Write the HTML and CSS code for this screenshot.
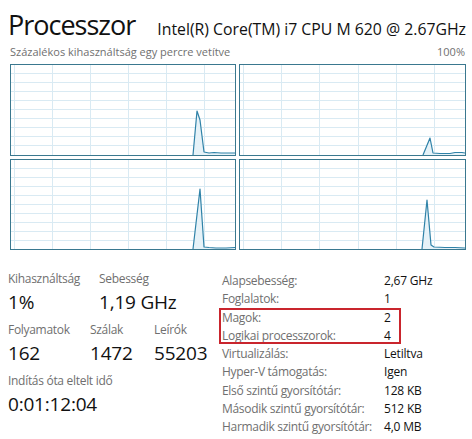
FILE: index.html
```html
<!DOCTYPE html>
<html lang="hu">
<head>
<meta charset="utf-8">
<title>Processzor</title>
<link rel="stylesheet" href="styles.css">
</head>
<body>
<div class="page">
  <header class="head">
    <h1 class="title">Processzor</h1>
    <div class="model">Intel(R) Core(TM) i7 CPU M 620 @ 2.67GHz</div>
  </header>
  <div class="sub">
    <span>Százalékos kihasználtság egy percre vetítve</span>
    <span>100%</span>
  </div>
  <div class="charts">
    <div class="chart">
      <svg viewBox="0 0 224 90" preserveAspectRatio="none">
        <g class="grid">
          <line x1="3.5" y1="0" x2="3.5" y2="90"/><line x1="41.5" y1="0" x2="41.5" y2="90"/><line x1="79.5" y1="0" x2="79.5" y2="90"/><line x1="117.5" y1="0" x2="117.5" y2="90"/><line x1="155.5" y1="0" x2="155.5" y2="90"/><line x1="193.5" y1="0" x2="193.5" y2="90"/>
          <line x1="0" y1="8.5" x2="224" y2="8.5"/><line x1="0" y1="17.5" x2="224" y2="17.5"/><line x1="0" y1="26.5" x2="224" y2="26.5"/><line x1="0" y1="35.5" x2="224" y2="35.5"/><line x1="0" y1="44.5" x2="224" y2="44.5"/><line x1="0" y1="53.5" x2="224" y2="53.5"/><line x1="0" y1="62.5" x2="224" y2="62.5"/><line x1="0" y1="71.5" x2="224" y2="71.5"/><line x1="0" y1="80.5" x2="224" y2="80.5"/>
        </g>
        <polygon class="fill" points="182,90 186,46 189,55 193,87 198,88 203,87.5 210,88 224,88 224,90"/>
        <polyline class="line" points="182,90 186,46 189,55 193,87 198,88 203,87.5 210,88 224,88"/>
      </svg>
    </div>
    <div class="chart">
      <svg viewBox="0 0 225 90" preserveAspectRatio="none">
        <g class="grid">
          <line x1="3.5" y1="0" x2="3.5" y2="90"/><line x1="41.5" y1="0" x2="41.5" y2="90"/><line x1="79.5" y1="0" x2="79.5" y2="90"/><line x1="118.5" y1="0" x2="118.5" y2="90"/><line x1="156.5" y1="0" x2="156.5" y2="90"/><line x1="194.5" y1="0" x2="194.5" y2="90"/>
          <line x1="0" y1="8.5" x2="225" y2="8.5"/><line x1="0" y1="17.5" x2="225" y2="17.5"/><line x1="0" y1="26.5" x2="225" y2="26.5"/><line x1="0" y1="35.5" x2="225" y2="35.5"/><line x1="0" y1="44.5" x2="225" y2="44.5"/><line x1="0" y1="53.5" x2="225" y2="53.5"/><line x1="0" y1="62.5" x2="225" y2="62.5"/><line x1="0" y1="71.5" x2="225" y2="71.5"/><line x1="0" y1="80.5" x2="225" y2="80.5"/>
        </g>
        <polygon class="fill" points="183,90 190,73 193,88 200,88.5 210,88.5 215,87.5 222,87.5 225,88 225,90"/>
        <polyline class="line" points="183,90 190,73 193,88 200,88.5 210,88.5 215,87.5 222,87.5 225,88"/>
      </svg>
    </div>
    <div class="chart">
      <svg viewBox="0 0 224 89" preserveAspectRatio="none">
        <g class="grid">
          <line x1="3.5" y1="0" x2="3.5" y2="89"/><line x1="41.5" y1="0" x2="41.5" y2="89"/><line x1="79.5" y1="0" x2="79.5" y2="89"/><line x1="117.5" y1="0" x2="117.5" y2="89"/><line x1="155.5" y1="0" x2="155.5" y2="89"/><line x1="193.5" y1="0" x2="193.5" y2="89"/>
          <line x1="0" y1="8.5" x2="224" y2="8.5"/><line x1="0" y1="17.5" x2="224" y2="17.5"/><line x1="0" y1="26.5" x2="224" y2="26.5"/><line x1="0" y1="35.5" x2="224" y2="35.5"/><line x1="0" y1="44.5" x2="224" y2="44.5"/><line x1="0" y1="53.5" x2="224" y2="53.5"/><line x1="0" y1="62.5" x2="224" y2="62.5"/><line x1="0" y1="71.5" x2="224" y2="71.5"/><line x1="0" y1="80.5" x2="224" y2="80.5"/>
        </g>
        <polygon class="fill" points="182,89 189,29 193,87 198,87.5 205,88 215,88 224,87.5 224,89"/>
        <polyline class="line" points="182,89 189,29 193,87 198,87.5 205,88 215,88 224,87.5"/>
      </svg>
    </div>
    <div class="chart">
      <svg viewBox="0 0 225 89" preserveAspectRatio="none">
        <g class="grid">
          <line x1="3.5" y1="0" x2="3.5" y2="89"/><line x1="41.5" y1="0" x2="41.5" y2="89"/><line x1="79.5" y1="0" x2="79.5" y2="89"/><line x1="118.5" y1="0" x2="118.5" y2="89"/><line x1="156.5" y1="0" x2="156.5" y2="89"/><line x1="194.5" y1="0" x2="194.5" y2="89"/>
          <line x1="0" y1="8.5" x2="225" y2="8.5"/><line x1="0" y1="17.5" x2="225" y2="17.5"/><line x1="0" y1="26.5" x2="225" y2="26.5"/><line x1="0" y1="35.5" x2="225" y2="35.5"/><line x1="0" y1="44.5" x2="225" y2="44.5"/><line x1="0" y1="53.5" x2="225" y2="53.5"/><line x1="0" y1="62.5" x2="225" y2="62.5"/><line x1="0" y1="71.5" x2="225" y2="71.5"/><line x1="0" y1="80.5" x2="225" y2="80.5"/>
        </g>
        <polygon class="fill" points="182,89 187,40 191,85 194,87 205,87.5 215,87.5 225,88 225,89"/>
        <polyline class="line" points="182,89 187,40 191,85 194,87 205,87.5 215,87.5 225,88"/>
      </svg>
    </div>
  </div>
  <section class="bottom">
    <div class="stats">
      <div class="row">
        <div class="stat w91"><div class="label">Kihasználtság</div><div class="value">1%</div></div>
        <div class="stat"><div class="label">Sebesség</div><div class="value">1,19 GHz</div></div>
      </div>
      <div class="row">
        <div class="stat w82"><div class="label">Folyamatok</div><div class="value">162</div></div>
        <div class="stat w64"><div class="label">Szálak</div><div class="value">1472</div></div>
        <div class="stat"><div class="label">Leírók</div><div class="value">55203</div></div>
      </div>
      <div class="row">
        <div class="stat"><div class="label">Indítás óta eltelt idő</div><div class="value">0:01:12:04</div></div>
      </div>
    </div>
    <div class="props">
      <div class="prop"><span class="k">Alapsebesség:</span><span class="v">2,67 GHz</span></div>
      <div class="prop"><span class="k">Foglalatok:</span><span class="v">1</span></div>
      <div class="hl">
        <div class="prop"><span class="k">Magok:</span><span class="v">2</span></div>
        <div class="prop"><span class="k">Logikai processzorok:</span><span class="v">4</span></div>
      </div>
      <div class="prop"><span class="k">Virtualizálás:</span><span class="v">Letiltva</span></div>
      <div class="prop"><span class="k">Hyper-V támogatás:</span><span class="v">Igen</span></div>
      <div class="prop"><span class="k">Első szintű gyorsítótár:</span><span class="v">128 KB</span></div>
      <div class="prop"><span class="k">Második szintű gyorsítótár:</span><span class="v">512 KB</span></div>
      <div class="prop"><span class="k">Harmadik szintű gyorsítótár:</span><span class="v">4,0 MB</span></div>
    </div>
  </section>
</div>
</body>
</html>
```
FILE: styles.css
```css
* { box-sizing: border-box; }
html, body { margin: 0; padding: 0; background: #fff; }
body {
  font-family: "Open Sans", "Noto Sans", sans-serif;
  color: #111;
  width: 472px;
  height: 439px;
  overflow: hidden;
}
.page { padding: 0 6px 0 8px; }
.head {
  display: flex;
  align-items: baseline;
  justify-content: space-between;
  height: 44px;
  padding-top: 6px;
}
.title {
  margin: 0;
  font-size: 27px;
  font-weight: 400;
  line-height: 37px;
  letter-spacing: -1px;
}
.model {
  font-size: 15.8px;
  line-height: 20px;
  letter-spacing: 0;
}
.sub {
  display: flex;
  justify-content: space-between;
  font-size: 11px;
  line-height: 16px;
  color: #707070;
  padding: 0 1px 0 2px;
  height: 20px;
}
.charts {
  display: grid;
  grid-template-columns: 226px 227px;
  grid-template-rows: 92px 91px;
  column-gap: 3px;
  row-gap: 3px;
  margin-left: 2px;
}
.chart {
  border: 1px solid #3a788f;
  background: #fff;
}
.chart svg { display: block; width: 100%; height: 100%; }
.grid line { stroke: #d9eaf3; stroke-width: 1; }
.fill { fill: #e6f2f8; }
.line { fill: none; stroke: #2f82a8; stroke-width: 1.2; stroke-linejoin: round; }

.bottom {
  display: flex;
  margin-top: 21px;
}
.stats { width: 214px; }
.row { display: flex; height: 51px; }
.w91 { width: 91px; }
.w82 { width: 82px; }
.w64 { width: 64px; }
.label {
  font-size: 12px;
  line-height: 16px;
  color: #6f6f6f;
  letter-spacing: -0.3px;
}
.value {
  font-size: 19px;
  line-height: 30px;
  color: #111;
  letter-spacing: -0.2px;
}
.props {
  font-size: 12px;
  padding-top: 1px;
}
.prop {
  display: flex;
  height: 18.3px;
  line-height: 18px;
}
.k { width: 162px; color: #6f6f6f; letter-spacing: -0.3px; }
.v { color: #111; letter-spacing: -0.2px; }
.hl { position: relative; }
.hl::after {
  content: "";
  position: absolute;
  left: -3px;
  top: -1px;
  width: 178px;
  height: 32px;
  border: 2px solid #c9252d;
}
```
